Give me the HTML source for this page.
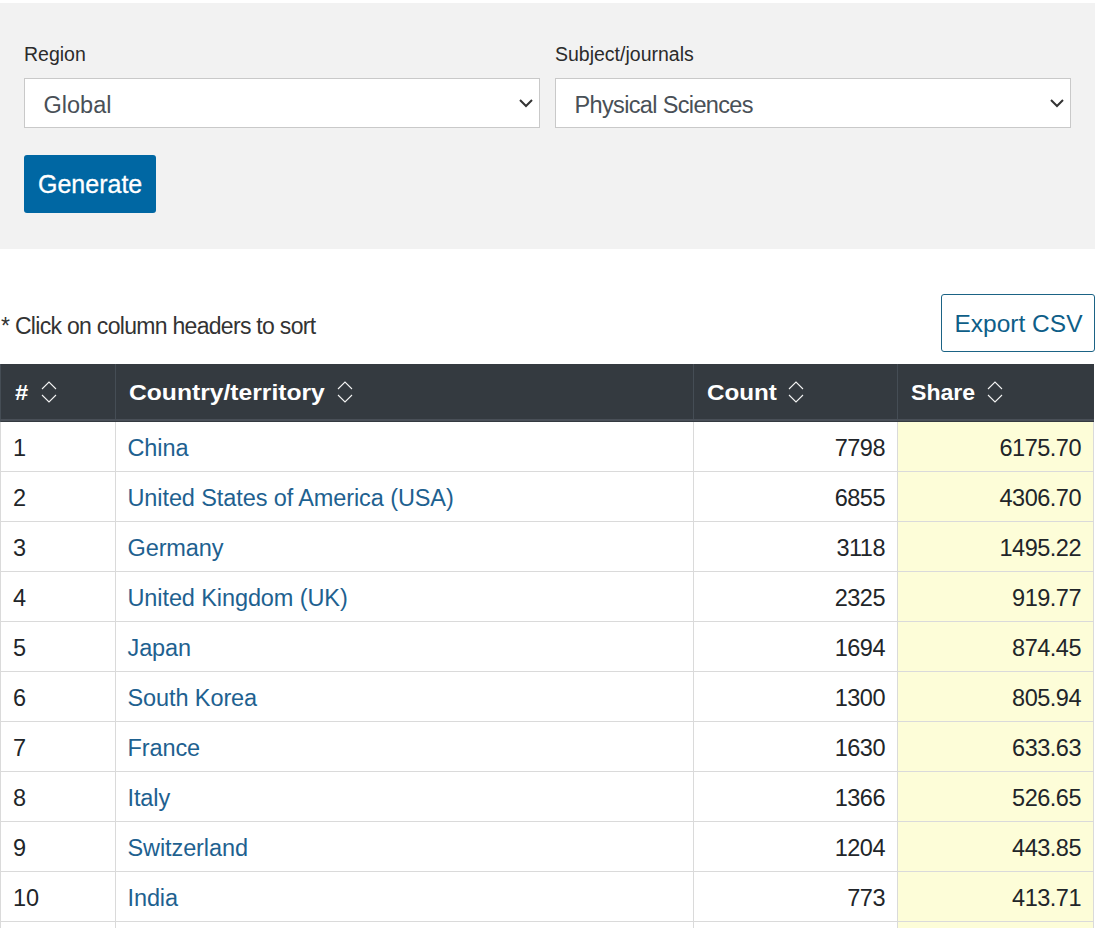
<!DOCTYPE html>
<html><head><meta charset="utf-8">
<style>
*{box-sizing:border-box;margin:0;padding:0}
html,body{width:1096px;height:928px;overflow:hidden;background:#fff;font-family:"Liberation Sans",sans-serif;color:#212529}
.abs{position:absolute}
.panel{left:0;top:3px;width:1095px;height:246px;background:#f2f2f2}
.lbl{font-size:19.5px;line-height:24px;color:#2b2b2b;white-space:nowrap}
.sel{height:50px;width:516px;top:78px;background:#fff;border:1px solid #c9c9c9}
.sel .t{position:absolute;left:19px;top:2px;line-height:48px;font-size:23.5px;color:#495057;white-space:nowrap}
.chev{position:absolute;right:5px;top:19px;width:16px;height:10px}
.btn{left:24px;top:155px;width:132px;height:58px;background:#0067a3;border-radius:3px;color:#fff;-webkit-text-stroke:0.3px #fff;font-size:25px;line-height:58px;text-indent:14px;white-space:nowrap}
.note{left:1px;top:312px;font-size:23px;letter-spacing:-0.7px;line-height:28px;color:#333;white-space:nowrap}
.exp{left:941px;top:294px;width:154px;height:58px;border:1px solid #1b6385;border-radius:3px;color:#0e5e88;font-size:24.5px;line-height:57px;text-indent:12.5px;white-space:nowrap;background:#fff}
.thead{left:0;top:364px;width:1094px;height:58px;background:#343a40;z-index:2;border-left:1px solid #454d55}
.tb{position:absolute;left:-1px;top:55px;width:1094px;height:2px;background:#494f57}
.th{position:absolute;top:1px;height:55px;line-height:55px;color:#fff;font-weight:bold;font-size:22px;transform-origin:0 0;white-space:nowrap}
.vd{position:absolute;top:0;width:1px;height:55px;background:#454d55}
.sort{position:absolute;top:17px;width:16px;height:22px}
.row{left:0;width:1094px;height:50px;border-top:1px solid #dadada;border-left:1px solid #dadada;border-right:1px solid #dadada}
.row .c{position:absolute;top:2px;height:49px;line-height:49px;font-size:23.5px;white-space:nowrap}
.row .d{position:absolute;top:0;width:1px;height:49px;background:#dadada}
.row .y{position:absolute;left:897px;top:0;width:195px;height:49px;background:#fdfdd8}
.lnk{color:#1e6190}
.n{letter-spacing:-0.5px}
</style></head><body>
<div class="abs panel"></div>
<div class="abs lbl" style="left:24px;top:42px">Region</div>
<div class="abs lbl" style="left:555px;top:42px">Subject/journals</div>
<div class="abs sel" style="left:24px"><span class="t" style="left:18.5px">Global</span>
<svg class="chev" viewBox="0 0 16 10"><path d="M2 2 L8 8 L14 2" fill="none" stroke="#333" stroke-width="2"/></svg></div>
<div class="abs sel" style="left:555px"><span class="t" style="left:18.5px;letter-spacing:-0.65px">Physical Sciences</span>
<svg class="chev" viewBox="0 0 16 10"><path d="M2 2 L8 8 L14 2" fill="none" stroke="#333" stroke-width="2"/></svg></div>
<div class="abs btn">Generate</div>
<div class="abs note">* Click on column headers to sort</div>
<div class="abs exp">Export CSV</div>
<div class="abs thead"><div class="tb"></div>
 <div class="vd" style="left:114px"></div>
 <div class="vd" style="left:692px"></div>
 <div class="vd" style="left:896px"></div>
 <div class="th" style="left:14px;transform:scaleX(1.08)">#</div>
 <svg class="sort" style="left:40px" viewBox="0 0 16 22"><path d="M1 8 L8 1 L15 8 M1 14 L8 21 L15 14" fill="none" stroke="#f4f4f4" stroke-width="1.1"/></svg>
 <div class="th" style="left:128px;transform:scaleX(1.12)">Country/territory</div>
 <svg class="sort" style="left:336px" viewBox="0 0 16 22"><path d="M1 8 L8 1 L15 8 M1 14 L8 21 L15 14" fill="none" stroke="#f4f4f4" stroke-width="1.1"/></svg>
 <div class="th" style="left:706px;transform:scaleX(1.1)">Count</div>
 <svg class="sort" style="left:787px" viewBox="0 0 16 22"><path d="M1 8 L8 1 L15 8 M1 14 L8 21 L15 14" fill="none" stroke="#f4f4f4" stroke-width="1.1"/></svg>
 <div class="th" style="left:910px;transform:scaleX(1.05)">Share</div>
 <svg class="sort" style="left:986px" viewBox="0 0 16 22"><path d="M1 8 L8 1 L15 8 M1 14 L8 21 L15 14" fill="none" stroke="#f4f4f4" stroke-width="1.1"/></svg>
</div>
<div class="abs row" style="top:421px"><div class="y"></div><div class="d" style="left:114px"></div><div class="d" style="left:692px"></div><div class="d" style="left:896px"></div><div class="c" style="left:12px">1</div><div class="c lnk" style="left:126.5px;letter-spacing:-0.1px">China</div><div class="c n" style="right:208px">7798</div><div class="c n" style="right:12px">6175.70</div></div>
<div class="abs row" style="top:471px"><div class="y"></div><div class="d" style="left:114px"></div><div class="d" style="left:692px"></div><div class="d" style="left:896px"></div><div class="c" style="left:12px">2</div><div class="c lnk" style="left:126.5px;letter-spacing:-0.1px">United States of America (USA)</div><div class="c n" style="right:208px">6855</div><div class="c n" style="right:12px">4306.70</div></div>
<div class="abs row" style="top:521px"><div class="y"></div><div class="d" style="left:114px"></div><div class="d" style="left:692px"></div><div class="d" style="left:896px"></div><div class="c" style="left:12px">3</div><div class="c lnk" style="left:126.5px;letter-spacing:-0.1px">Germany</div><div class="c n" style="right:208px">3118</div><div class="c n" style="right:12px">1495.22</div></div>
<div class="abs row" style="top:571px"><div class="y"></div><div class="d" style="left:114px"></div><div class="d" style="left:692px"></div><div class="d" style="left:896px"></div><div class="c" style="left:12px">4</div><div class="c lnk" style="left:126.5px;letter-spacing:-0.1px">United Kingdom (UK)</div><div class="c n" style="right:208px">2325</div><div class="c n" style="right:12px">919.77</div></div>
<div class="abs row" style="top:621px"><div class="y"></div><div class="d" style="left:114px"></div><div class="d" style="left:692px"></div><div class="d" style="left:896px"></div><div class="c" style="left:12px">5</div><div class="c lnk" style="left:126.5px;letter-spacing:-0.1px">Japan</div><div class="c n" style="right:208px">1694</div><div class="c n" style="right:12px">874.45</div></div>
<div class="abs row" style="top:671px"><div class="y"></div><div class="d" style="left:114px"></div><div class="d" style="left:692px"></div><div class="d" style="left:896px"></div><div class="c" style="left:12px">6</div><div class="c lnk" style="left:126.5px;letter-spacing:-0.1px">South Korea</div><div class="c n" style="right:208px">1300</div><div class="c n" style="right:12px">805.94</div></div>
<div class="abs row" style="top:721px"><div class="y"></div><div class="d" style="left:114px"></div><div class="d" style="left:692px"></div><div class="d" style="left:896px"></div><div class="c" style="left:12px">7</div><div class="c lnk" style="left:126.5px;letter-spacing:-0.1px">France</div><div class="c n" style="right:208px">1630</div><div class="c n" style="right:12px">633.63</div></div>
<div class="abs row" style="top:771px"><div class="y"></div><div class="d" style="left:114px"></div><div class="d" style="left:692px"></div><div class="d" style="left:896px"></div><div class="c" style="left:12px">8</div><div class="c lnk" style="left:126.5px;letter-spacing:-0.1px">Italy</div><div class="c n" style="right:208px">1366</div><div class="c n" style="right:12px">526.65</div></div>
<div class="abs row" style="top:821px"><div class="y"></div><div class="d" style="left:114px"></div><div class="d" style="left:692px"></div><div class="d" style="left:896px"></div><div class="c" style="left:12px">9</div><div class="c lnk" style="left:126.5px;letter-spacing:-0.1px">Switzerland</div><div class="c n" style="right:208px">1204</div><div class="c n" style="right:12px">443.85</div></div>
<div class="abs row" style="top:871px"><div class="y"></div><div class="d" style="left:114px"></div><div class="d" style="left:692px"></div><div class="d" style="left:896px"></div><div class="c" style="left:12px">10</div><div class="c lnk" style="left:126.5px;letter-spacing:-0.1px">India</div><div class="c n" style="right:208px">773</div><div class="c n" style="right:12px">413.71</div></div>
<div class="abs row" style="top:921px"><div class="y"></div><div class="d" style="left:114px"></div><div class="d" style="left:692px"></div><div class="d" style="left:896px"></div><div class="c" style="left:12px"></div><div class="c lnk" style="left:126.5px;letter-spacing:-0.1px"></div><div class="c n" style="right:208px"></div><div class="c n" style="right:12px"></div></div>
</body></html>
